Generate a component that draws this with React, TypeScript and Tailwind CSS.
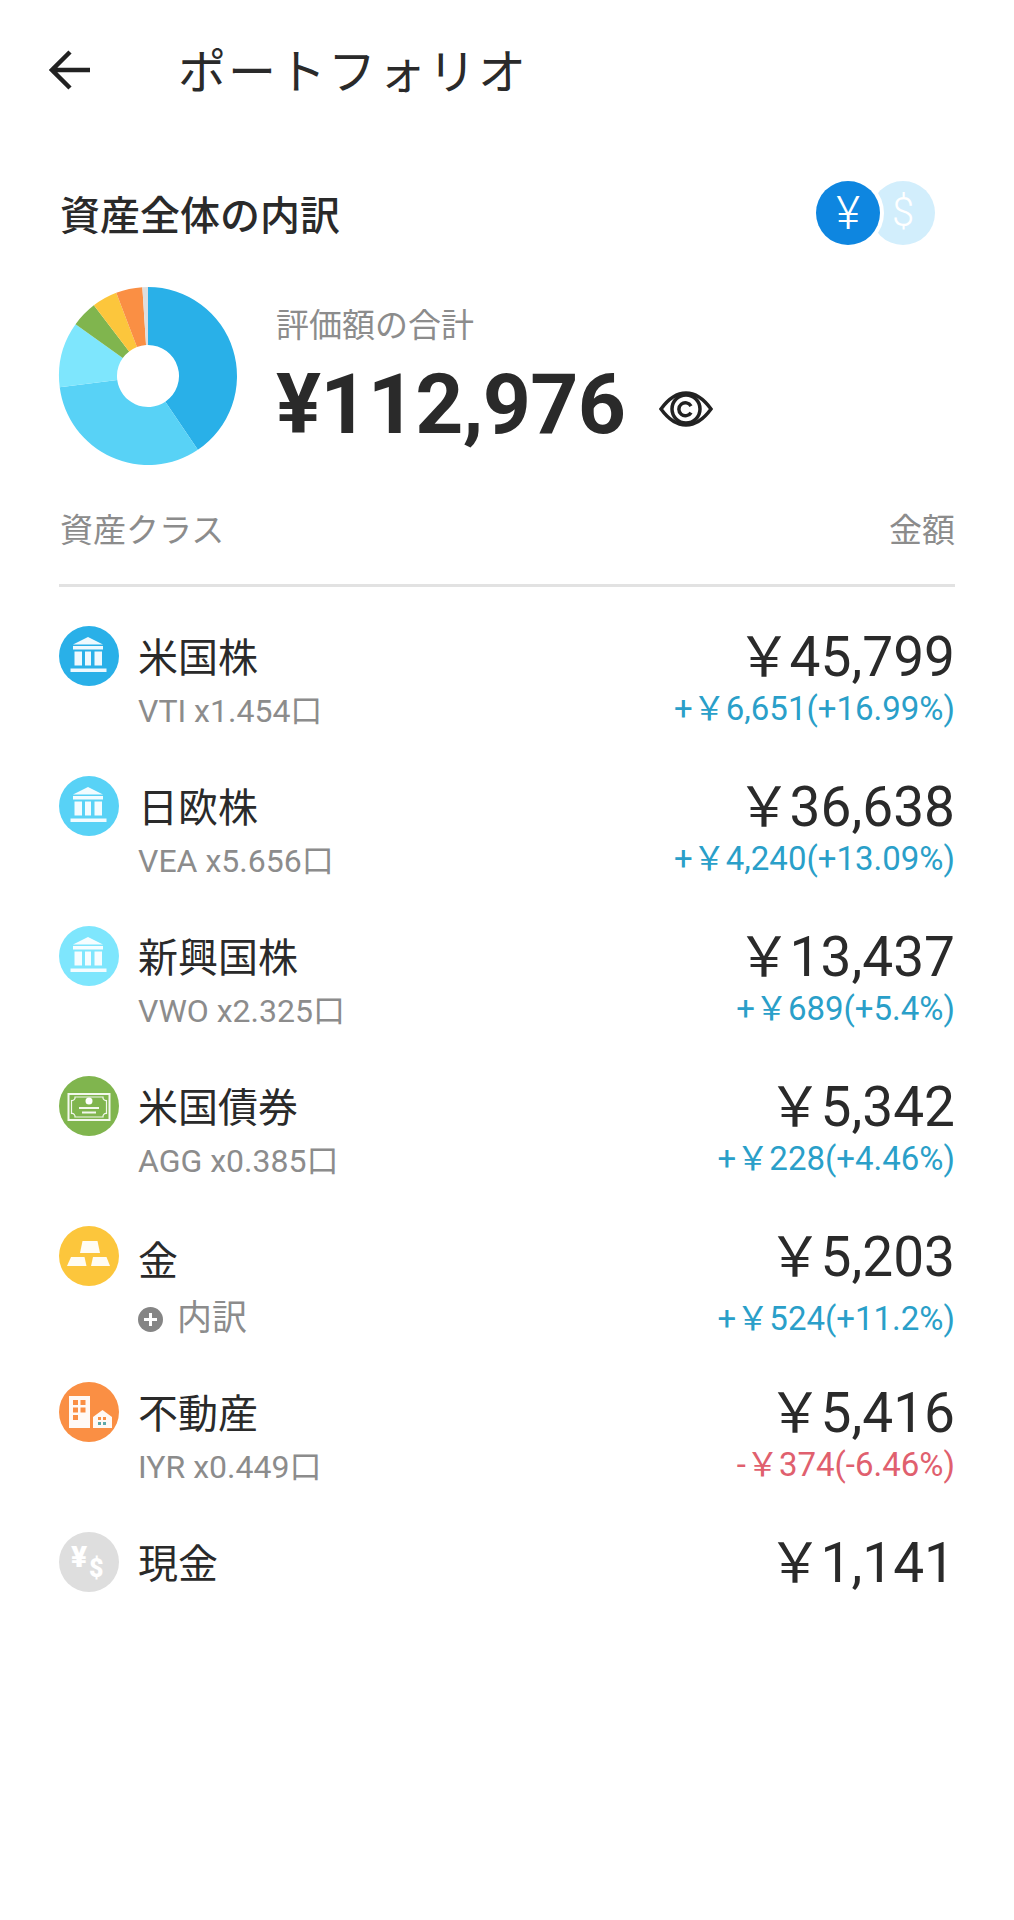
const FONT = 'font-["Roboto","Noto_Sans_CJK_JP",sans-serif]';

type Asset = {
  name: string;
  sub?: string;
  value: string;
  change?: string;
  negative?: boolean;
  color: string;
  icon: 'bank' | 'bond' | 'gold' | 'estate' | 'cash';
  rowClass: string;
};

const assets: Asset[] = [
  { name: '米国株', sub: 'VTI x1.454口', value: '45,799', change: '+￥6,651(+16.99%)', color: 'bg-[#29b0e8]', icon: 'bank', rowClass: 'h-[150px]' },
  { name: '日欧株', sub: 'VEA x5.656口', value: '36,638', change: '+￥4,240(+13.09%)', color: 'bg-[#58d2f6]', icon: 'bank', rowClass: 'h-[150px]' },
  { name: '新興国株', sub: 'VWO x2.325口', value: '13,437', change: '+￥689(+5.4%)', color: 'bg-[#7ee6fd]', icon: 'bank', rowClass: 'h-[150px]' },
  { name: '米国債券', sub: 'AGG x0.385口', value: '5,342', change: '+￥228(+4.46%)', color: 'bg-[#80b54e]', icon: 'bond', rowClass: 'h-[150px]' },
  { name: '金', value: '5,203', change: '+￥524(+11.2%)', color: 'bg-[#fcc63c]', icon: 'gold', rowClass: 'h-[156px]' },
  { name: '不動産', sub: 'IYR x0.449口', value: '5,416', change: '-￥374(-6.46%)', negative: true, color: 'bg-[#fa8f44]', icon: 'estate', rowClass: 'h-[150px]' },
  { name: '現金', value: '1,141', color: 'bg-[#dedede]', icon: 'cash', rowClass: 'h-[150px]' },
];

const slices = [
  { share: 45799, color: '#29b0e8' },
  { share: 36638, color: '#58d2f6' },
  { share: 13437, color: '#7ee6fd' },
  { share: 5342, color: '#80b54e' },
  { share: 5203, color: '#fcc63c' },
  { share: 5416, color: '#fa8f44' },
  { share: 1141, color: '#dedede' },
];

function Donut() {
  const total = slices.reduce((sum, s) => sum + s.share, 0);
  let start = 0;
  return (
    <svg width="180" height="180" viewBox="-90 -90 180 180" className="shrink-0">
      {slices.map((s) => {
        const a0 = (start / total) * Math.PI * 2;
        start += s.share;
        const a1 = (start / total) * Math.PI * 2;
        const large = a1 - a0 > Math.PI ? 1 : 0;
        const [R, r] = [89, 31];
        const d = `M ${R * Math.sin(a0)} ${-R * Math.cos(a0)} A ${R} ${R} 0 ${large} 1 ${R * Math.sin(a1)} ${-R * Math.cos(a1)} L ${r * Math.sin(a1)} ${-r * Math.cos(a1)} A ${r} ${r} 0 ${large} 0 ${r * Math.sin(a0)} ${-r * Math.cos(a0)} Z`;
        return <path key={s.color} d={d} fill={s.color} />;
      })}
    </svg>
  );
}

function AssetIcon({ icon, color }: { icon: Asset['icon']; color: string }) {
  if (icon === 'cash') {
    return (
      <div className={`relative h-[60px] w-[60px] shrink-0 rounded-full ${color}`}>
        <span className="absolute left-[12px] top-[10px] text-[30px] font-black leading-none text-white">¥</span>
        <span className="absolute left-[30px] top-[24px] text-[25px] font-black leading-none text-white">$</span>
      </div>
    );
  }
  return (
    <div className={`h-[60px] w-[60px] shrink-0 rounded-full ${color}`}>
      <svg width="60" height="60" viewBox="4 4 60 60">
        {icon === 'bank' && (
          <g fill="#fff" fillOpacity="0.92">
            <path d="M33 15 L48 22.5 H18 Z" />
            <rect x="18" y="24" width="30" height="3.5" />
            <rect x="19.5" y="29.5" width="7.5" height="14" />
            <rect x="30" y="29.5" width="6" height="14" />
            <rect x="39.5" y="29.5" width="7.5" height="14" />
            <rect x="15.5" y="46.5" width="36" height="3.5" />
          </g>
        )}
        {icon === 'bond' && (
          <g fill="none" stroke="#fff" strokeOpacity="0.9">
            <rect x="13.5" y="22" width="41" height="26" strokeWidth="2" />
            <path d="M20 25 H48 A3 3 0 0 0 51.5 28.5 V41.5 A3 3 0 0 0 48 45 H20 A3 3 0 0 0 16.5 41.5 V28.5 A3 3 0 0 0 20 25 Z" strokeWidth="1.2" />
            <circle cx="34" cy="29" r="3.5" fill="#fff" stroke="none" />
            <path d="M24 36 H44 M27 40.5 H41" strokeWidth="2" />
          </g>
        )}
        {icon === 'gold' && (
          <g fill="#fff" fillOpacity="0.94">
            <path d="M27.5 19 H42.5 L45 31 H25 Z" />
            <path d="M16 35 H29.5 L31.5 44 H12 Z" />
            <path d="M38 35 H51.5 L55 44 H36 Z" />
          </g>
        )}
        {icon === 'estate' && (
          <g>
            <rect x="14" y="18" width="21" height="32" fill="#fff" fillOpacity="0.95" />
            <g fill="#fa8f44">
              <rect x="18" y="22" width="5" height="5" />
              <rect x="25.5" y="22" width="5" height="5" />
              <rect x="18" y="29.5" width="5" height="5" />
              <rect x="25.5" y="29.5" width="5" height="5" />
              <rect x="18" y="37" width="5" height="5" />
            </g>
            <path d="M38 39 L47.5 32 L57 39 V50 H38 Z" fill="#fff" fillOpacity="0.95" />
            <rect x="43" y="39" width="3" height="3" fill="#fa8f44" />
            <rect x="48" y="39" width="3" height="3" fill="#fa8f44" />
            <rect x="43" y="44" width="3" height="3" fill="#5fa8a8" />
            <rect x="48" y="44" width="3" height="3" fill="#5fa8a8" />
          </g>
        )}
      </svg>
    </div>
  );
}

function AssetRow({ asset }: { asset: Asset }) {
  const isGold = asset.icon === 'gold';
  return (
    <div className={`flex justify-between ${asset.rowClass}`}>
      <div className="flex gap-[19px]">
        <AssetIcon icon={asset.icon} color={asset.color} />
        <div className="flex flex-col">
          <div className={`${isGold ? 'mt-[12px]' : 'mt-[9px]'} h-[48px] text-[40px] leading-[48px] text-[#2a2a2a]`}>
            {asset.name}
          </div>
          {asset.sub && <div className="mt-[8px] text-[32px] leading-[40px] text-[#8c8c8c]">{asset.sub}</div>}
          {isGold && (
            <div className="mt-[11px] flex items-center gap-[14px] text-[35px] leading-[44px] text-[#8c8c8c]">
              <span className="flex h-[25px] w-[25px] items-center justify-center rounded-full bg-[#858585]">
                <svg width="13" height="13" viewBox="0 0 13 13" stroke="#fff" strokeWidth="3">
                  <path d="M6.5 0 V13 M0 6.5 H13" />
                </svg>
              </span>
              内訳
            </div>
          )}
        </div>
      </div>
      <div className="flex flex-col items-end">
        <div className="mt-[-2px] h-[66px] text-[55px] leading-[66px] text-[#2a2a2a]">
          <span className="mr-[-2px]">￥</span>
          {asset.value}
        </div>
        {asset.change && (
          <div
            className={`${isGold ? 'mt-[9px]' : 'mt-[-1px]'} text-[33px] leading-[40px] ${asset.negative ? 'text-[#e0606e]' : 'text-[#2a9fc9]'}`}
          >
            {asset.change}
          </div>
        )}
      </div>
    </div>
  );
}

export default function App() {
  return (
    <div className={`min-h-[1920px] w-[1014px] bg-white ${FONT}`}>
      <header className="flex h-[140px] items-center pl-[49px]">
        <svg width="42" height="42" viewBox="0 0 42 42" fill="none" stroke="#222" strokeWidth="4.5">
          <path d="M41 21 H4 M21 3 L3 21 L21 39" />
        </svg>
        <h1 className="ml-[87px] mt-[6px] text-[48px] leading-none tracking-[2px] text-[#2a2a2a]">ポートフォリオ</h1>
      </header>

      <main className="px-[59px]">
        <section className="mt-[41px] flex h-[64px] items-center justify-between">
          <h2 className="mt-[7px] pl-[1px] text-[40px] font-medium leading-none text-[#2a2a2a]">資産全体の内訳</h2>
          <div className="mr-[20px] flex">
            <div className="z-10 flex h-[64px] w-[64px] items-center justify-center rounded-full bg-[#0e86e0] text-[46px] font-light leading-none text-white ring-[4px] ring-white">
              ¥
            </div>
            <div className="ml-[-9px] flex h-[64px] w-[64px] items-center justify-center rounded-full bg-[#d2eefc] text-[40px] font-light leading-none text-white">
              $
            </div>
          </div>
        </section>

        <section className="mt-[41px] flex items-center">
          <div className="ml-[-1px]">
            <Donut />
          </div>
          <div className="ml-[38px]">
            <div className="mt-[6px] text-[33px] leading-[40px] text-[#8c8c8c]">評価額の合計</div>
            <div className="mt-[11px] flex items-center">
              <span className="text-[84px] font-bold leading-[96px] tracking-[-0.7px] text-[#2a2a2a]">¥112,976</span>
              <svg width="54" height="36" viewBox="0 0 54 36" fill="none" stroke="#222" className="ml-[34px] mt-[8px]">
                <path d="M2 18 C10 7 18 2 27 2 C36 2 44 7 52 18 C44 29 36 34 27 34 C18 34 10 29 2 18 Z" strokeWidth="3.5" />
                <circle cx="27" cy="18" r="14" strokeWidth="3.5" />
                <path d="M32 15 A6.5 6.5 0 1 0 32 21.5" strokeWidth="3.5" />
              </svg>
            </div>
          </div>
        </section>

        <div className="mt-[45px] flex justify-between border-b-[3px] border-[#e2e2e2] pb-[33px] pl-[1px] text-[33px] leading-[40px] text-[#8c8c8c]">
          <span>資産クラス</span>
          <span>金額</span>
        </div>

        <div className="mt-[39px]">
          {assets.map((asset) => (
            <AssetRow key={asset.name} asset={asset} />
          ))}
        </div>
      </main>
    </div>
  );
}
